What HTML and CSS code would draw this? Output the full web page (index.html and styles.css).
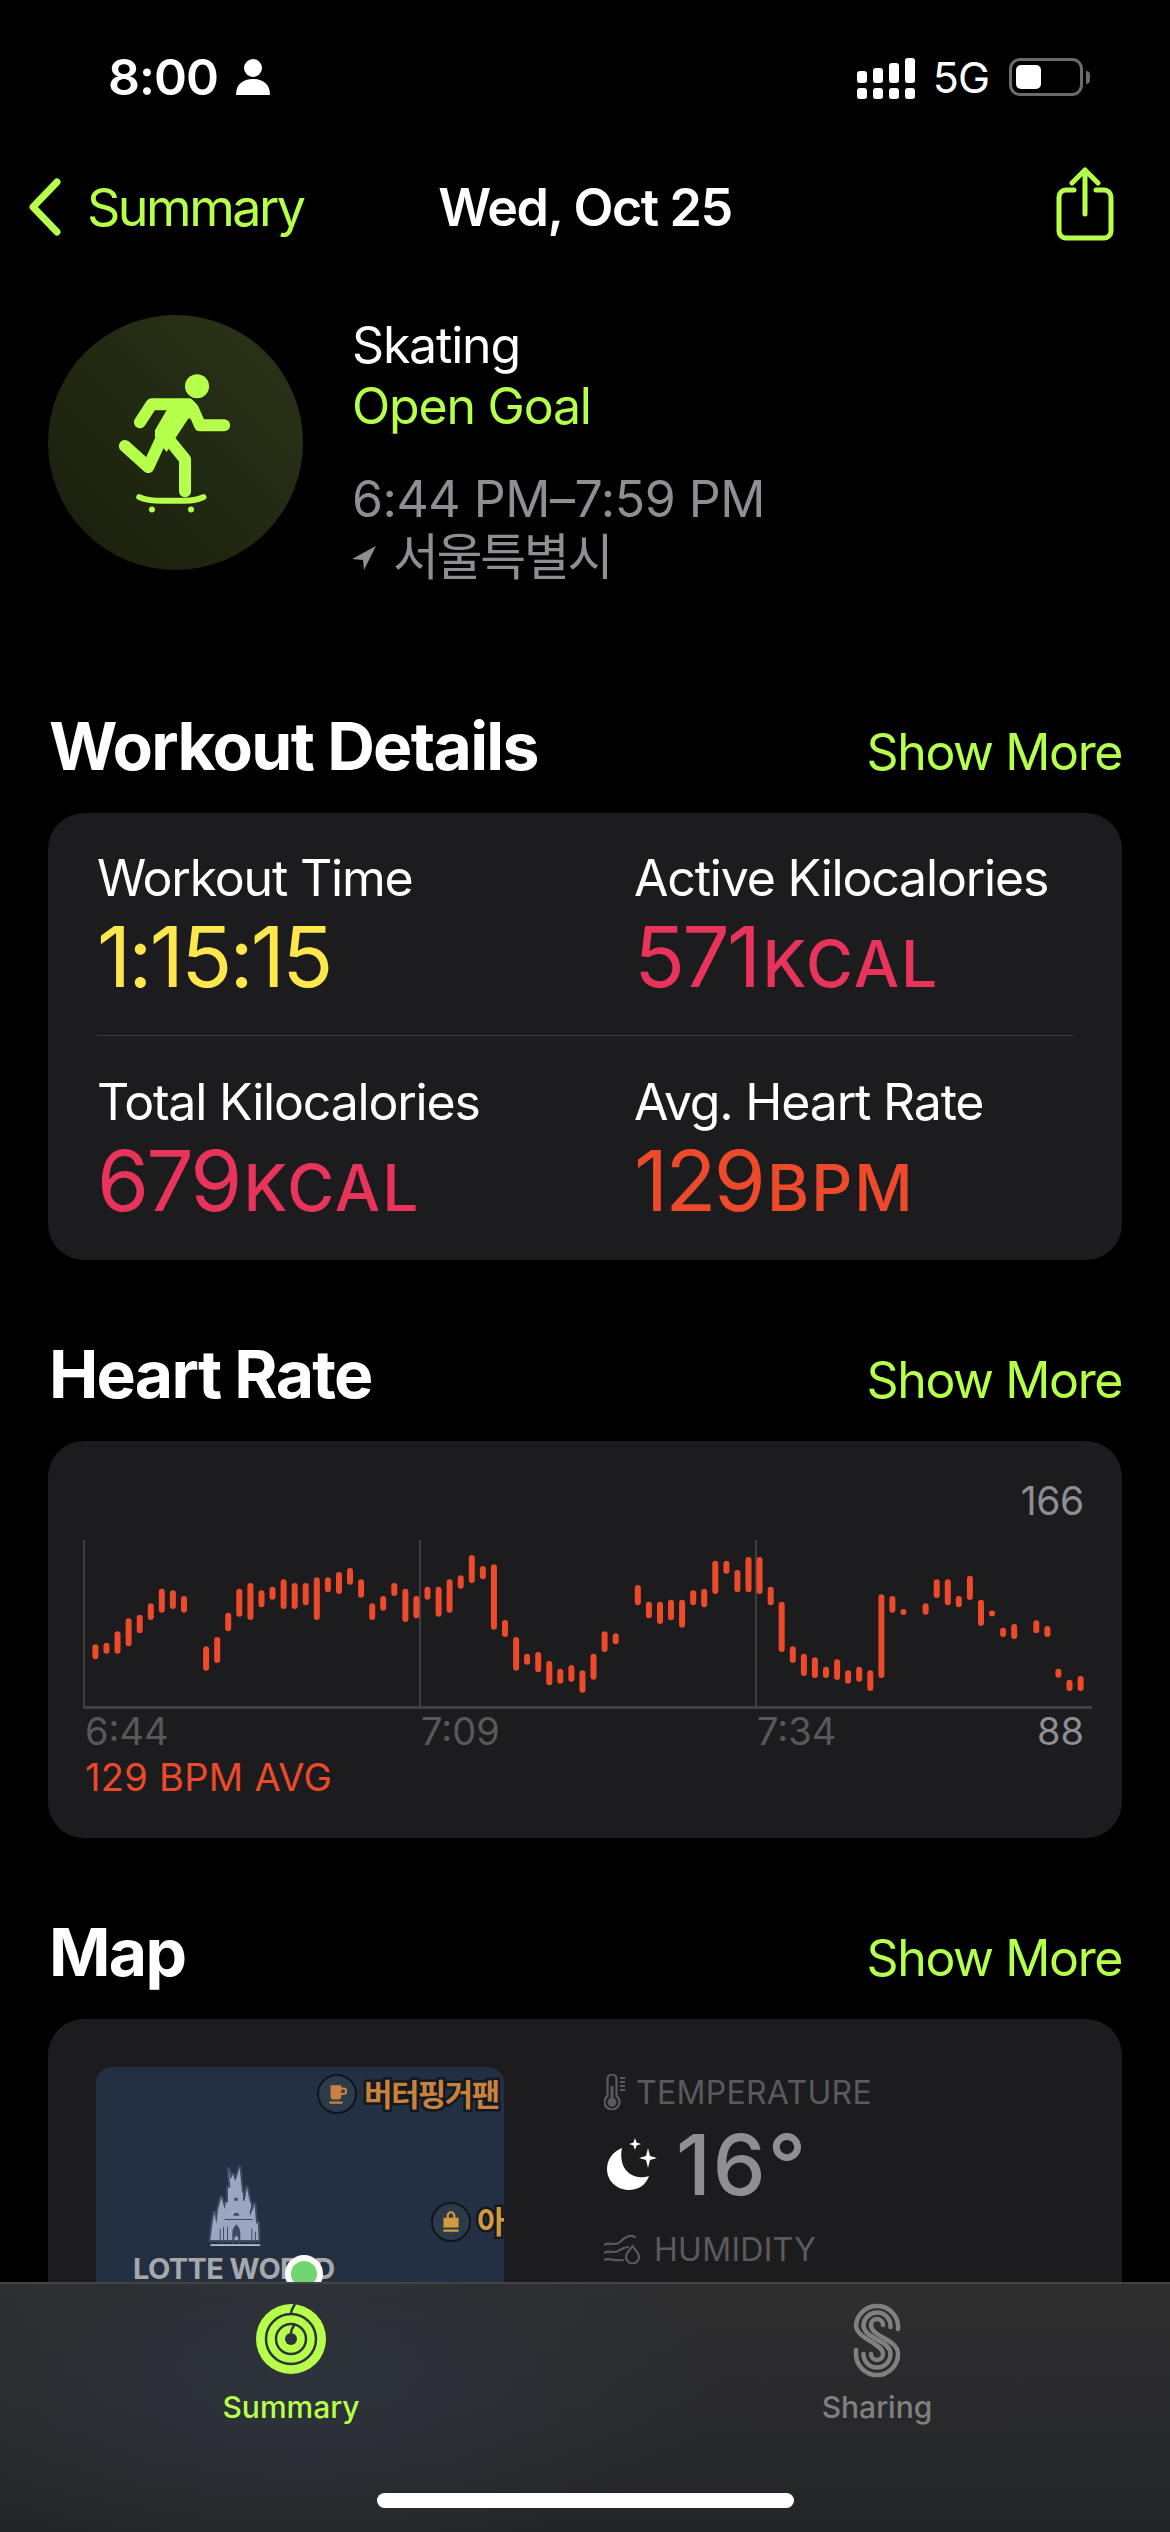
FILE: index.html
```html
<!DOCTYPE html>
<html lang="en">
<head>
    <meta charset="UTF-8">
    <meta name="viewport" content="width=device-width, initial-scale=1.0">
    <title>Wed, Oct 25 - Skating</title>
    <link rel="stylesheet" href="styles.css">
</head>
<body>
    <div class="phone">
        <!-- Status bar -->
        <div class="status">
            <div class="status-left">
                <span class="clock">8:00</span>
                <svg class="person" viewBox="0 0 34 36"><circle cx="17" cy="9" r="9"/><path d="M0 36c0-11 7-16 17-16s17 5 17 16z"/></svg>
            </div>
            <div class="status-right">
                <svg class="signal" viewBox="0 0 58 46">
                    <rect x="0" y="13" width="10" height="12" rx="3"/>
                    <rect x="16" y="10" width="10" height="15" rx="3"/>
                    <rect x="32" y="5" width="10" height="20" rx="3"/>
                    <rect x="48" y="0" width="10" height="25" rx="3"/>
                    <rect x="0" y="30" width="10" height="11" rx="3"/>
                    <rect x="16" y="30" width="10" height="11" rx="3"/>
                    <rect x="32" y="30" width="10" height="11" rx="3"/>
                    <rect x="48" y="30" width="10" height="11" rx="3"/>
                </svg>
                <span class="network">5G</span>
                <div class="battery"><div class="battery-fill"></div></div>
                <div class="battery-nub"></div>
            </div>
        </div>

        <!-- Nav -->
        <div class="nav">
            <div class="nav-back">
                <svg class="chevron" viewBox="0 0 34 58"><path d="M29 4L5 29l24 25"/></svg>
                <span>Summary</span>
            </div>
            <div class="nav-title">Wed, Oct 25</div>
            <svg class="share" viewBox="0 0 60 74">
                <path d="M19 23H11a7 7 0 0 0-7 7v34a7 7 0 0 0 7 7h38a7 7 0 0 0 7-7V30a7 7 0 0 0-7-7h-8"/>
                <path d="M30 47V3M17 16L30 3l13 13"/>
            </svg>
        </div>

        <!-- Workout summary -->
        <div class="workout">
            <div class="workout-icon">
                <svg viewBox="25 45 763 763">
                    <circle cx="471" cy="258" r="36" class="skater-fill"/>
                    <path class="skater-fill" d="M380 330l70-36 15 12 25 52-45-3-40 60-25 40-35-45v-20z"/>
                    <path class="skater-line" d="M300 366l35-54h110M458 325l22 50h72M385 415l50 62v95M362 420l-37 80-70-63"/>
                    <path class="skater-board" d="M298 590c25 12 50 11 75 11h45c30 0 50 0 72-11"/>
                    <circle cx="336" cy="627" r="9" class="skater-fill"/>
                    <circle cx="453" cy="627" r="9" class="skater-fill"/>
                </svg>
            </div>
            <div class="workout-text">
                <div class="workout-name">Skating</div>
                <div class="workout-goal">Open Goal</div>
                <div class="workout-time">6:44 PM–7:59 PM</div>
                <div class="workout-place">
                    <svg viewBox="0 0 24 24"><path d="M24 0L0 13l11 1 1 10z"/></svg>
                    <span>서울특별시</span>
                </div>
            </div>
        </div>

        <!-- Workout details -->
        <div class="section-head">
            <h2>Workout Details</h2>
            <span class="show-more">Show More</span>
        </div>
        <div class="card">
            <div class="stats stats-top">
                <div>
                    <div class="stat-label">Workout Time</div>
                    <div class="stat-value yellow">1:15:15</div>
                </div>
                <div>
                    <div class="stat-label">Active Kilocalories</div>
                    <div class="stat-value pink">571<span class="unit">KCAL</span></div>
                </div>
            </div>
            <div class="divider"></div>
            <div class="stats stats-bottom">
                <div>
                    <div class="stat-label">Total Kilocalories</div>
                    <div class="stat-value pink">679<span class="unit">KCAL</span></div>
                </div>
                <div>
                    <div class="stat-label">Avg. Heart Rate</div>
                    <div class="stat-value orange">129<span class="unit">BPM</span></div>
                </div>
            </div>
        </div>

        <!-- Heart rate -->
        <div class="section-head">
            <h2>Heart Rate</h2>
            <span class="show-more">Show More</span>
        </div>
        <div class="card chart-card">
            <div class="chart-max">166</div>
            <svg class="chart" viewBox="70 1523 1030 187">
                <path class="grid-line" d="M84 1539V1707M420 1539V1707M756 1539V1707"/>
                <path class="axis-line" d="M83 1706.5H1092"/>
                <path class="bars" d="M95.4 1646.3V1655.3M106.5 1644.7V1649.7M117.5 1633.3V1649.7M128.6 1620.3V1642.3M139.7 1616.7V1629.3M150.8 1605.3V1616M161.8 1590.7V1608.7M172.9 1592.3V1605M184 1598V1608.7
                M206.1 1648.3V1666.7M217.2 1639V1659M228.2 1614.7V1627.3M239.3 1590.7V1612.7M250.4 1585V1616M261.5 1592.3V1603.3M272.5 1588.7V1595.7M283.6 1581.3V1605M294.7 1585V1605M305.7 1585V1601.3M316.8 1579.3V1616M327.9 1579.3V1588.3M339 1574V1590M350 1570V1580.7M361.1 1581.3V1593.7M372.2 1605.3V1616M383.2 1598V1606.7M394.3 1585V1592M405.4 1590.7V1618M416.4 1598V1614.3M427.5 1588.7V1595.7M438.6 1588.7V1612.7M449.6 1581.3V1608.7M460.7 1577.3V1584.7M471.8 1557V1579M482.9 1568V1575.3M493.9 1566.3V1625.7M505 1622V1633M516.1 1639V1666.7M527.1 1655.7V1660.7M538.2 1654V1668.3M549.3 1663V1681.3M560.3 1670.7V1679.7M571.4 1667V1677.7M582.5 1672.3V1688.7M593.5 1655.7V1675.7M604.6 1633.3V1648M615.7 1635.3V1640.3
                M637.8 1587V1601.3M648.9 1603.7V1614.3M660 1603.7V1620M671 1601.7V1616.3M682.1 1601.7V1623.7M693.2 1592.3V1601.3M704.2 1590.7V1603.3M715.3 1562.7V1590M726.4 1562.7V1569.7M737.4 1572V1588.3M748.5 1559V1588.3M759.6 1559V1590M770.7 1588.7V1601.3M781.7 1603.7V1648M792.8 1648.3V1659M803.9 1655.7V1672M814.9 1659.3V1674M826 1668.7V1674M837.1 1661.3V1676M848.1 1672.3V1679.7M859.2 1668.7V1677.7M870.3 1672.3V1687M881.4 1596.3V1674M892.4 1598V1608.7M903.5 1611V1611.01
                M925.6 1605.3V1610.7M936.7 1581.3V1594M947.8 1581.3V1601.3M958.8 1598V1603.3M969.9 1577.7V1596M981 1601.7V1622M992 1612.5V1612.51M1003.1 1629.7V1633M1014.2 1626V1635M1036.3 1622.3V1629.3M1047.4 1628V1633M1058.4 1670.7V1673.7M1069.5 1681.7V1687M1080.6 1678V1687"/>
            </svg>
            <div class="chart-axis">
                <span>6:44</span>
                <span>7:09</span>
                <span>7:34</span>
                <span class="chart-min">88</span>
            </div>
            <div class="chart-avg">129 BPM AVG</div>
        </div>

        <!-- Map -->
        <div class="section-head">
            <h2>Map</h2>
            <span class="show-more">Show More</span>
        </div>
        <div class="card map-card">
            <div class="map">
                <div class="pin pin-cafe">
                    <svg viewBox="0 0 24 24"><path d="M6 4h10v10a3 3 0 0 1-3 3H9a3 3 0 0 1-3-3zM16 6h2a2.5 2.500 0 0 1 0 7h-2v-2h2a.6.6 0 0 0 0-3h-2zM5 19h12v2H5z"/></svg>
                </div>
                <div class="pin-label label-cafe">버터핑거팬</div>
                <div class="pin pin-shop">
                    <svg viewBox="0 0 24 24"><path d="M5 8h3V6a4 4 0 0 1 8 0v2h3v9H5zM10 8h4V6a2 2 0 0 0-4 0zM5 19h14v2H5z"/></svg>
                </div>
                <div class="pin-label label-shop">아</div>
                <svg class="castle" viewBox="55 45 165 250">
                    <path class="castle-body" d="M150 50l7 75h3v25h5l7-40 8 40 5 15-5 20 3 10 2-10 5-10 5-15 4 55 3 5 3-5v5l2 48H62l6-48 6-35 6 35 5-45 10-35 10 35 3-20h7v-45h7l-5-55 6 30 7-15 6 20 5-10z"/>
                    <path class="castle-cut" d="M128 283v-38c0-10 7-20 12-24 5 4 12 14 12 24v38h-6v-22l-6-7-6 7v22zM131 195c0-5 5-9 9-9s9 4 9 9zM134 150h10v-9h-10zM90 283v-50h3v50zM100 283v-55h3v55zM112 283v-55h3v55zM185 283v-50h3v50zM196 283v-40h3v40zM105 205h85v3h-85z"/>
                    <path class="castle-base" d="M62 281h150v5H62z"/>
                </svg>
                <div class="map-name">LOTTE WORLD</div>
                <div class="route-start"></div>
            </div>
            <div class="weather">
                <div class="weather-head">
                    <svg class="thermo" viewBox="0 0 22 36">
                        <path d="M3.500 5a4.500 4.500 0 0 1 9 0v17a7.500 7.500 0 1 1-9 0z"/>
                        <path class="thermo-fill" d="M6.500 12h3v12a4.500 4.500 0 1 1-3 0z"/>
                        <path d="M16 4h5M16 8h5M16 12h5M16 16h5"/>
                    </svg>
                    <span>TEMPERATURE</span>
                </div>
                <div class="weather-value">
                    <svg class="moon" viewBox="0 0 50 52">
                        <path class="moon-fill" d="M15 10C5 14 0 22 0 31C0 43 10 52 22 52C31 52 39 47 42 38C30 42 18 36 15 24C14 19 14 14 15 10Z"/>
                        <path class="moon-fill" d="M28 0L29.500 4.500L34 6L29.500 7.500L28 12L26.500 7.500L22 6L26.500 4.500ZM41 10L43 18L50 20L43 22L41 30L39 22L32 20L39 18Z"/>
                    </svg>
                    <span>16°</span>
                </div>
                <div class="weather-head humidity">
                    <svg class="wind" viewBox="0 0 36 30">
                        <path d="M0 11C6 7 10 13 16 8C20 4 26 0 31 3M0 19C6 15 10 21 16 16C19 14 22 13 24 13M0 26C5 23 10 28 19 26"/>
                        <path d="M28.500 12C31 16 35 19 35 23A6.500 6.500 0 0 1 22 23C22 19 26 16 28.500 12Z"/>
                    </svg>
                    <span>HUMIDITY</span>
                </div>
            </div>
        </div>

        <!-- Tab bar -->
        <div class="tabbar">
            <div class="tab tab-active">
                <svg class="tab-rings" viewBox="0 0 70 70">
                    <circle class="ring-bg" cx="35" cy="35" r="35"/>
                    <circle class="ring-gap" cx="35" cy="35" r="25"/>
                    <circle class="ring-gap" cx="35" cy="35" r="15"/>
                    <circle class="ring-hole" cx="35" cy="35" r="6"/>
                    <path class="ring-notch" d="M39 0c-2 4-4 5-4 10M39 20c-2 3-4 5-4 9"/>
                </svg>
                <span>Summary</span>
            </div>
            <div class="tab">
                <svg class="tab-sharing" viewBox="0 0 48 77">
                    <path d="M45 28A21 21 0 0 0 3 24C3 38 30 42 30 53A6 6 0 0 1 18 53"/>
                    <path d="M37.500 26A13.500 13.500 0 0 0 10.500 24C10.500 38 37.500 39 37.500 53A13.500 13.500 0 0 1 10.500 53"/>
                    <path d="M30 24A6 6 0 0 0 18 24C18 36 45 38 45 53A21 21 0 0 1 3 53V49"/>
                </svg>
                <span>Sharing</span>
            </div>
            <div class="home-indicator"></div>
        </div>
    </div>
</body>
</html>
```
FILE: styles.css
```css
* {
    box-sizing: border-box;
}

body {
    font-family: Inter, 'Noto Sans CJK KR', sans-serif;
    margin: 0;
    padding: 0;
    background: #000;
    color: #fff;
}

.phone {
    position: relative;
    width: 1170px;
    height: 2532px;
    overflow: hidden;
    background: #000;
}

/* Status bar */
.status {
    display: flex;
    justify-content: space-between;
    align-items: center;
    height: 54px;
    margin-top: 50px;
    padding: 0 80px 0 108px;
}

.status-left,
.status-right {
    display: flex;
    align-items: center;
}

.clock {
    font-size: 50px;
    font-weight: 600;
    letter-spacing: -1px;
}

.person {
    width: 34px;
    height: 36px;
    margin-left: 18px;
    fill: #fff;
}

.signal {
    width: 58px;
    height: 46px;
    fill: #fff;
    margin-top: 8px;
}

.network {
    font-size: 43px;
    margin-left: 18px;
    letter-spacing: -1px;
}

.battery {
    width: 74px;
    height: 38px;
    margin-left: 20px;
    padding: 4px;
    border: 3px solid #6b6b6b;
    border-radius: 11px;
}

.battery-fill {
    width: 25px;
    height: 100%;
    background: #fff;
    border-radius: 5px;
}

.battery-nub {
    width: 4px;
    height: 13px;
    margin-left: 3px;
    background: #6b6b6b;
    border-radius: 0 4px 4px 0;
}

/* Nav */
.nav {
    position: relative;
    display: flex;
    justify-content: space-between;
    align-items: center;
    height: 80px;
    margin-top: 63px;
    padding: 0 55px 0 28px;
}

.nav-back {
    display: flex;
    align-items: center;
    color: #b6ff4a;
    font-size: 52px;
    letter-spacing: -2.5px;
}

.chevron {
    width: 34px;
    height: 58px;
    margin-right: 25px;
    fill: none;
    stroke: #b6ff4a;
    stroke-width: 7;
    stroke-linecap: round;
    stroke-linejoin: round;
}

.nav-title {
    position: absolute;
    left: 0;
    right: 0;
    text-align: center;
    font-size: 52px;
    font-weight: 600;
    letter-spacing: -1.4px;
}

.share {
    width: 60px;
    height: 74px;
    margin-top: -6px;
    fill: none;
    stroke: #b6ff4a;
    stroke-width: 5;
    stroke-linecap: round;
    stroke-linejoin: round;
}

/* Workout summary */
.workout {
    display: flex;
    margin-top: 68px;
    padding-left: 48px;
}

.workout-icon {
    width: 255px;
    height: 255px;
    border-radius: 50%;
    background: linear-gradient(45deg, #191e0b 0%, #2b341a 100%);
}

.workout-icon svg {
    display: block;
    width: 100%;
    height: 100%;
}

.skater-fill {
    fill: #b6ff4a;
}

.skater-line {
    fill: none;
    stroke: #b6ff4a;
    stroke-width: 36;
    stroke-linecap: round;
    stroke-linejoin: round;
}

.skater-board {
    fill: none;
    stroke: #b6ff4a;
    stroke-width: 18;
    stroke-linecap: round;
}

.workout-text {
    margin-left: 49px;
    font-size: 50px;
    line-height: 61px;
    letter-spacing: -1.2px;
}

.workout-goal {
    color: #b6ff4a;
}

.workout-time {
    margin-top: 32px;
    color: #8e8e93;
    letter-spacing: -0.45px;
}

.workout-place {
    display: flex;
    align-items: center;
    margin-top: -3px;
    color: #8e8e93;
}

.workout-place svg {
    width: 24px;
    height: 24px;
    margin-right: 17px;
    fill: #8e8e93;
}

.workout-place span {
    font-size: 50px;
    letter-spacing: -2.4px;
}

/* Section headers */
.section-head {
    display: flex;
    justify-content: space-between;
    align-items: baseline;
    height: 80px;
    margin-top: 74px;
    padding: 0 48px 0 49px;
}

.workout + .section-head {
    margin-top: 118px;
}

.section-head h2 {
    margin: 0;
    font-size: 66px;
    line-height: 80px;
    font-weight: 700;
    letter-spacing: -1.7px;
}

.show-more {
    font-size: 50px;
    color: #b6ff4a;
    letter-spacing: -1.4px;
}

/* Cards */
.card {
    margin: 27px 48px 0;
    background: #1c1c1e;
    border-radius: 36px;
}

.stats {
    display: grid;
    grid-template-columns: 537px 1fr;
    padding-left: 49px;
}

.stats-top {
    padding-top: 35px;
    padding-bottom: 33px;
}

.stats-bottom {
    padding-top: 36px;
    padding-bottom: 34px;
}

.divider {
    height: 1px;
    margin: 0 48px 0 49px;
    background: #3a3a3c;
}

.stat-label {
    font-size: 50px;
    line-height: 60px;
    letter-spacing: -1.2px;
}

.stat-value {
    margin-top: 4px;
    font-size: 84px;
    line-height: 90px;
    letter-spacing: -2.8px;
    font-weight: 400;
}

.stat-value .unit {
    margin-left: 4px;
    font-size: 64px;
    line-height: 1;
    font-weight: 500;
    letter-spacing: 2px;
}

.yellow {
    color: #fde74c;
}

.pink {
    color: #e8335a;
}

.orange {
    color: #ec4a2b;
}

/* Heart rate chart */
.chart-card {
    height: 397px;
    padding-top: 37px;
}

.chart-max {
    height: 46px;
    padding-right: 38px;
    text-align: right;
    font-size: 39px;
    line-height: 46px;
    color: #8e8e93;
    letter-spacing: -0.3px;
}

.chart {
    display: block;
    width: 1030px;
    height: 187px;
    margin-left: 22px;
    overflow: visible;
}

.grid-line {
    fill: none;
    stroke: #404042;
    stroke-width: 2;
}

.axis-line {
    fill: none;
    stroke: #404042;
    stroke-width: 3;
}

.bars {
    fill: none;
    stroke: #ec4a2b;
    stroke-width: 6;
    stroke-linecap: round;
}

.chart-axis {
    display: grid;
    grid-template-columns: 336px 336px 1fr auto;
    padding: 0 38px 0 37px;
    font-size: 38px;
    line-height: 40px;
    color: #58585b;
    letter-spacing: 0;
}

.chart-min {
    color: #8e8e93;
}

.chart-avg {
    margin-top: 6px;
    padding-left: 37px;
    font-size: 38px;
    line-height: 40px;
    color: #ec4a2b;
    letter-spacing: 0.3px;
}

/* Map card */
.map-card {
    display: flex;
    height: 420px;
    padding: 48px 0 0 48px;
}

.map {
    position: relative;
    width: 408px;
    height: 330px;
    overflow: hidden;
    background: #233044;
    border-radius: 16px 16px 0 0;
}

.pin {
    position: absolute;
    display: flex;
    align-items: center;
    justify-content: center;
    width: 40px;
    height: 40px;
    background: #2c3a4a;
    border: 2px solid #10151c;
    border-radius: 50%;
}

.pin svg {
    width: 26px;
    height: 26px;
}

.pin-cafe {
    left: 221px;
    top: 7px;
}

.pin-cafe svg {
    fill: #c8823f;
}

.pin-shop {
    left: 335px;
    top: 135px;
}

.pin-shop svg {
    fill: #d19a3c;
}

.pin-label {
    position: absolute;
    font-size: 31px;
    font-weight: 700;
    line-height: 40px;
    white-space: nowrap;
    letter-spacing: -1.6px;
    -webkit-text-stroke: 5px #14181f;
    paint-order: stroke fill;
}

.label-cafe {
    left: 268px;
    top: 8px;
    color: #c8823f;
}

.label-shop {
    left: 381px;
    top: 135px;
    color: #d19a3c;
}

.castle {
    position: absolute;
    left: 112px;
    top: 99px;
    width: 55px;
    height: 83px;
    overflow: visible;
}

.castle-body {
    fill: #9aa6c2;
    stroke: #3c4b63;
    stroke-width: 12;
    stroke-linejoin: round;
    paint-order: stroke fill;
}

.castle-cut {
    fill: #3c4b63;
}

.castle-base {
    fill: #b4bdd2;
}

.map-name {
    position: absolute;
    left: 37px;
    top: 184px;
    font-size: 29px;
    font-weight: 700;
    line-height: 36px;
    white-space: nowrap;
    letter-spacing: -0.6px;
    color: #a3a8b2;
    -webkit-text-stroke: 4px #2a2f38;
    paint-order: stroke fill;
}

.route-start {
    position: absolute;
    left: 189px;
    top: 188px;
    width: 38px;
    height: 38px;
    background: #6fd672;
    border: 6px solid #fff;
    border-radius: 50%;
}

.weather {
    margin-left: 100px;
    padding-top: 7px;
}

.weather-head {
    display: flex;
    align-items: center;
    height: 36px;
    font-size: 32px;
    color: #5a5a5e;
    letter-spacing: 0.3px;
}

.thermo {
    width: 22px;
    height: 36px;
    margin-right: 10px;
    fill: none;
    stroke: #5a5a5e;
    stroke-width: 2.2;
}

.thermo-fill {
    fill: #5a5a5e;
    stroke: none;
}

.weather-value {
    display: flex;
    align-items: center;
    height: 80px;
    margin-top: 14px;
    font-size: 84px;
    font-weight: 500;
    color: #8e8e93;
    letter-spacing: 2px;
}

.moon {
    width: 50px;
    height: 52px;
    margin-left: 3px;
    margin-right: 19px;
}

.moon-fill {
    fill: #fff;
}

.humidity {
    margin-top: 27px;
}

.wind {
    width: 36px;
    height: 30px;
    margin-right: 14px;
    fill: none;
    stroke: #5a5a5e;
    stroke-width: 2.2;
    stroke-linecap: round;
}

/* Tab bar */
.tabbar {
    position: absolute;
    left: 0;
    right: 0;
    bottom: 0;
    display: flex;
    height: 250px;
    background:
        radial-gradient(ellipse 420px 190px at 300px 90px, #2e333c 0%, rgba(46, 51, 60, 0) 100%),
        linear-gradient(180deg, #2e2e2f 0%, #242528 100%);
    border-top: 2px solid #444446;
}

.tab {
    position: absolute;
    top: 0;
    width: 400px;
    display: flex;
    flex-direction: column;
    align-items: center;
    font-size: 30px;
    font-weight: 500;
    color: #808080;
}

.tab span {
    position: absolute;
    top: 103px;
    line-height: 40px;
}

.tab-active {
    left: 91px;
    color: #b6ff4a;
}

.tab + .tab {
    left: 677px;
}

.tab-rings {
    width: 70px;
    height: 70px;
    margin-top: 20px;
}

.ring-bg {
    fill: #b6ff4a;
}

.ring-gap {
    fill: none;
    stroke: #2e323a;
    stroke-width: 2.5;
}

.ring-hole {
    fill: #2e323a;
}

.ring-notch {
    fill: none;
    stroke: #2e323a;
    stroke-width: 2.5;
}

.tab-sharing {
    width: 48px;
    height: 77px;
    margin-top: 17px;
    fill: none;
    stroke: #808080;
    stroke-width: 4.5;
    stroke-linecap: round;
}

.home-indicator {
    position: absolute;
    left: 377px;
    top: 209px;
    width: 417px;
    height: 15px;
    background: #fff;
    border-radius: 8px;
}
```
